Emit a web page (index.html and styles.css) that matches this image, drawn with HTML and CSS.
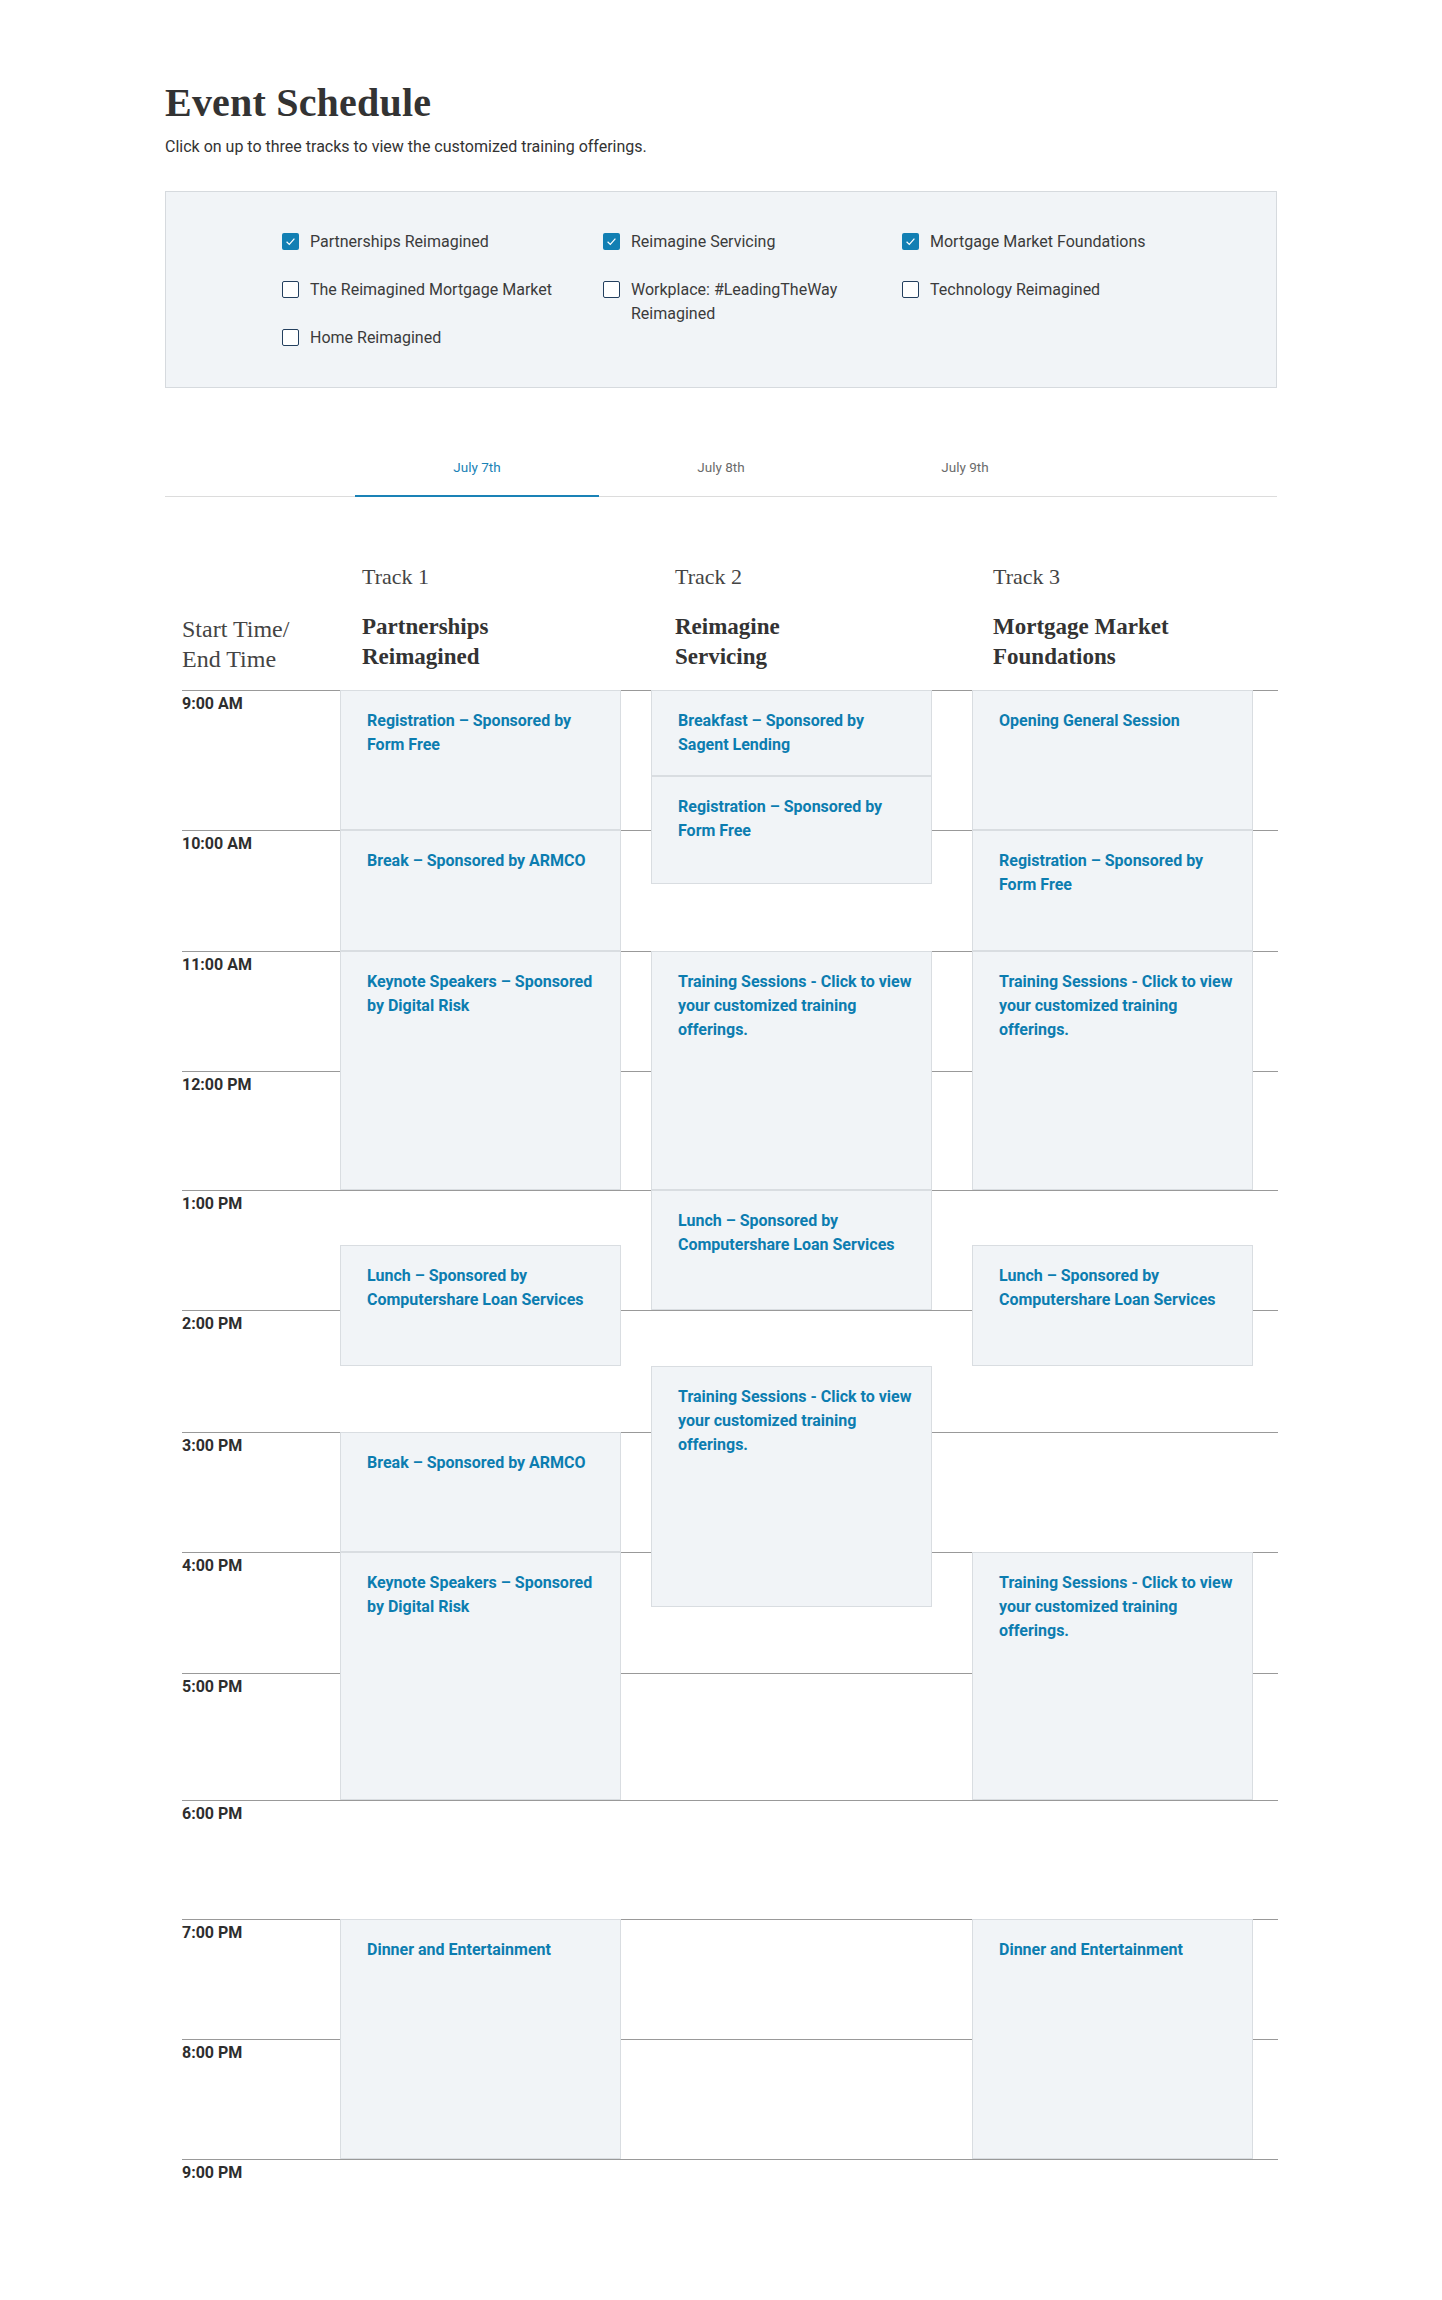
FILE: index.html
```html
<!DOCTYPE html>
<html lang="en">
<head>
<meta charset="utf-8">
<title>Event Schedule</title>
<link rel="stylesheet" href="styles.css">
</head>
<body>
<main class="page">
  <h1 class="title">Event Schedule</h1>
  <p class="intro">Click on up to three tracks to view the customized training offerings.</p>

  <section class="filters">
    <div class="filter-col">
      <label class="filter"><span class="box checked"><svg viewBox="0 0 17 17" width="17" height="17"><path d="M4.6 8.8 L7.3 11.4 L12.4 5.6" fill="none" stroke="#fff" stroke-width="1.2"/></svg></span><span class="filter-text">Partnerships Reimagined</span></label>
      <label class="filter"><span class="box"></span><span class="filter-text">The Reimagined Mortgage Market</span></label>
      <label class="filter"><span class="box"></span><span class="filter-text">Home Reimagined</span></label>
    </div>
    <div class="filter-col">
      <label class="filter"><span class="box checked"><svg viewBox="0 0 17 17" width="17" height="17"><path d="M4.6 8.8 L7.3 11.4 L12.4 5.6" fill="none" stroke="#fff" stroke-width="1.2"/></svg></span><span class="filter-text">Reimagine Servicing</span></label>
      <label class="filter"><span class="box"></span><span class="filter-text">Workplace: #LeadingTheWay Reimagined</span></label>
    </div>
    <div class="filter-col">
      <label class="filter"><span class="box checked"><svg viewBox="0 0 17 17" width="17" height="17"><path d="M4.6 8.8 L7.3 11.4 L12.4 5.6" fill="none" stroke="#fff" stroke-width="1.2"/></svg></span><span class="filter-text">Mortgage Market Foundations</span></label>
      <label class="filter"><span class="box"></span><span class="filter-text">Technology Reimagined</span></label>
    </div>
  </section>

  <nav class="tabs">
    <a class="tab active">July 7th</a>
    <a class="tab">July 8th</a>
    <a class="tab">July 9th</a>
  </nav>

  <section class="schedule">
    <div class="sched-head">
      <div class="head-time">Start Time/<br>End Time</div>
      <div class="head-track t1"><div class="track-num">Track 1</div><div class="track-name">Partnerships Reimagined</div></div>
      <div class="head-track t2"><div class="track-num">Track 2</div><div class="track-name">Reimagine Servicing</div></div>
      <div class="head-track t3"><div class="track-num">Track 3</div><div class="track-name">Mortgage Market Foundations</div></div>
    </div>

    <div class="grid">
      <div class="hour h9">9:00 AM</div>
      <div class="hour h10">10:00 AM</div>
      <div class="hour h11">11:00 AM</div>
      <div class="hour h12">12:00 PM</div>
      <div class="hour h13">1:00 PM</div>
      <div class="hour h14">2:00 PM</div>
      <div class="hour h15">3:00 PM</div>
      <div class="hour h16">4:00 PM</div>
      <div class="hour h17">5:00 PM</div>
      <div class="hour h18">6:00 PM</div>
      <div class="hour h19">7:00 PM</div>
      <div class="hour h20">8:00 PM</div>
      <div class="hour h21">9:00 PM</div>

      <a class="slot c1 r1-3">Registration – Sponsored by<br>Form Free</a>
      <a class="slot c1 r3-5">Break – Sponsored by ARMCO</a>
      <a class="slot c1 r5-7">Keynote Speakers – Sponsored<br>by Digital Risk</a>
      <a class="slot c1 r8-10">Lunch – Sponsored by<br>Computershare Loan Services</a>
      <a class="slot c1 r11-12">Break – Sponsored by ARMCO</a>
      <a class="slot c1 r12-15">Keynote Speakers – Sponsored<br>by Digital Risk</a>
      <a class="slot c1 r16-18">Dinner and Entertainment</a>

      <a class="slot c2 r1-2">Breakfast – Sponsored by<br>Sagent Lending</a>
      <a class="slot c2 r2-4">Registration – Sponsored by<br>Form Free</a>
      <a class="slot c2 r5-7">Training Sessions - Click to view<br>your customized training<br>offerings.</a>
      <a class="slot c2 r7-9">Lunch – Sponsored by<br>Computershare Loan Services</a>
      <a class="slot c2 r10-13">Training Sessions - Click to view<br>your customized training<br>offerings.</a>

      <a class="slot c3 r1-3">Opening General Session</a>
      <a class="slot c3 r3-5">Registration – Sponsored by<br>Form Free</a>
      <a class="slot c3 r5-7">Training Sessions - Click to view<br>your customized training<br>offerings.</a>
      <a class="slot c3 r8-10">Lunch – Sponsored by<br>Computershare Loan Services</a>
      <a class="slot c3 r12-15">Training Sessions - Click to view<br>your customized training<br>offerings.</a>
      <a class="slot c3 r16-18">Dinner and Entertainment</a>
    </div>
  </section>
</main>
</body>
</html>
```

FILE: styles.css
```css
* { box-sizing: border-box; }
html, body { margin: 0; padding: 0; background: #fff; }
body { font-family: Roboto, "Liberation Sans", Arial, sans-serif; color: #333; }

.page {
  width: 1112px;
  margin: 0 auto;
  padding-top: 80px;
  padding-bottom: 80px;
}

.title {
  font-family: "Liberation Serif", "Times New Roman", serif;
  font-weight: 700;
  font-size: 40px;
  line-height: 46px;
  margin: 0;
  color: #333;
  letter-spacing: 0.2px;
}

.intro {
  margin: 10px 0 0;
  font-size: 16px;
  line-height: 22px;
  color: #333;
}

/* filters */
.filters {
  margin-top: 33px;
  background: #f1f4f7;
  border: 1px solid #d6dade;
  padding: 38px 0 37px 116px;
  display: grid;
  grid-template-columns: 321px 299px 1fr;
}
.filter-col {
  display: flex;
  flex-direction: column;
  gap: 24px;
}
.filter {
  display: flex;
  align-items: flex-start;
  gap: 11px;
  font-size: 16px;
  line-height: 24px;
  color: #3b3b3b;
}
.filter-text { max-width: 258px; }
.box {
  flex: none;
  width: 17px;
  height: 17px;
  margin-top: 3px;
  border: 1.5px solid #233f5e;
  border-radius: 2px;
  background: #fff;
  display: flex;
}
.box.checked {
  border: none;
  background: #127fb3;
}

/* tabs */
.tabs {
  margin-top: 69px;
  display: flex;
  justify-content: center;
  border-bottom: 1px solid #dcdcdc;
}
.tab {
  width: 244px;
  text-align: center;
  font-size: 13.5px;
  line-height: 20px;
  padding-bottom: 18px;
  color: #6b6b6b;
  border-bottom: 2px solid transparent;
  margin-bottom: -1px;
}
.tab.active {
  color: #1a82b6;
  border-bottom-color: #1a82b6;
}

/* schedule */
.schedule {
  margin-left: 17px;
  width: 1096px;
}
.sched-head, .grid {
  display: grid;
  grid-template-columns: 158px 281px 30px 281px 40px 281px 25px;
}
.sched-head {
  margin-top: 65px;
  padding-bottom: 18px;
  align-items: end;
}
.head-time {
  grid-column: 1;
  font-family: "Liberation Serif", "Times New Roman", serif;
  font-size: 24px;
  line-height: 30px;
  color: #444;
  margin-bottom: -2px;
}
.head-track { padding-left: 22px; }
.head-track.t1 { grid-column: 2; }
.head-track.t2 { grid-column: 4; padding-left: 24px; }
.head-track.t3 { grid-column: 6; padding-left: 21px; }
.track-num {
  font-family: "Liberation Serif", "Times New Roman", serif;
  font-size: 22px;
  line-height: 30px;
  color: #444;
  margin-bottom: 20px;
}
.track-name {
  font-family: "Liberation Serif", "Times New Roman", serif;
  font-weight: 700;
  font-size: 23px;
  line-height: 30px;
  color: #333;
  max-width: 190px;
}

.grid {
  grid-template-rows: 86px 54px 54px 67px 120px 119px 55px 65px 56px 66px 120px 55px 66px 127px 119px 120px 120px 50px;
}
.hour {
  grid-column: 1 / -1;
  border-top: 1px solid #999;
  font-weight: 700;
  font-size: 16px;
  line-height: 20px;
  padding-top: 3px;
  color: #2e2e2e;
}
.h9  { grid-row: 1 / 3; }
.h10 { grid-row: 3 / 5; }
.h11 { grid-row: 5 / 6; }
.h12 { grid-row: 6 / 7; }
.h13 { grid-row: 7 / 9; }
.h14 { grid-row: 9 / 11; }
.h15 { grid-row: 11 / 12; }
.h16 { grid-row: 12 / 14; }
.h17 { grid-row: 14 / 15; }
.h18 { grid-row: 15 / 16; }
.h19 { grid-row: 16 / 17; }
.h20 { grid-row: 17 / 18; }
.h21 { grid-row: 18 / 19; }

.slot {
  background: #f1f4f7;
  border: 1px solid #d9dde1;
  padding: 18px 6px 0 26px;
  font-weight: 700;
  font-size: 16px;
  line-height: 24px;
  color: #0c7db0;
  text-decoration: none;
}
.c1 { grid-column: 2; }
.c2 { grid-column: 4; }
.c3 { grid-column: 6; }
.r1-2 { grid-row: 1 / 2; }
.r1-3 { grid-row: 1 / 3; }
.r2-4 { grid-row: 2 / 4; }
.r3-5 { grid-row: 3 / 5; }
.r5-7 { grid-row: 5 / 7; }
.r7-9 { grid-row: 7 / 9; }
.r8-10 { grid-row: 8 / 10; }
.r10-13 { grid-row: 10 / 13; }
.r11-12 { grid-row: 11 / 12; }
.r12-15 { grid-row: 12 / 15; }
.r16-18 { grid-row: 16 / 18; }
```
